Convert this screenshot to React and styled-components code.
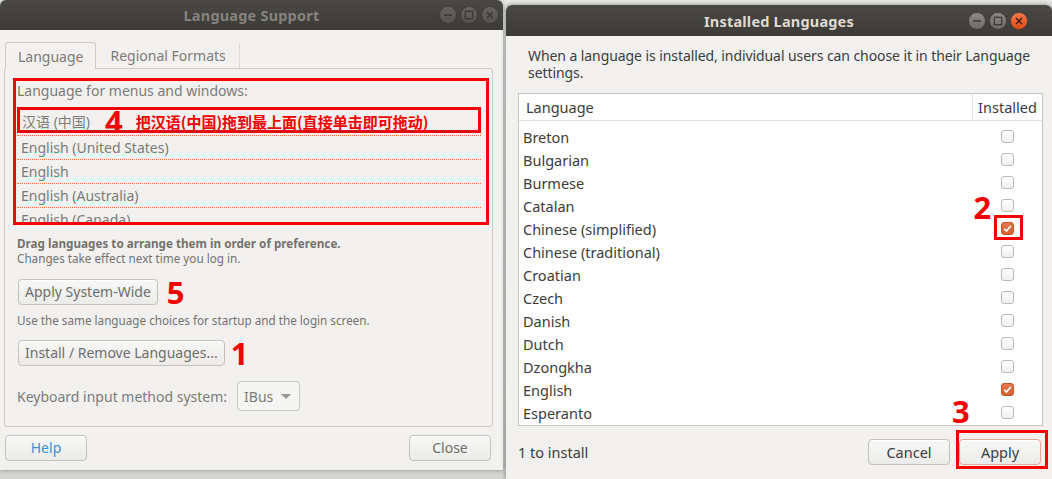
import React from "react";
import styled, { createGlobalStyle } from "styled-components";

const Global = createGlobalStyle`
  html, body { margin: 0; padding: 0; }
  body {
    width: 1052px; height: 479px; overflow: hidden;
    background: #d6d6d4;
    font-family: "Noto Sans", "Noto Sans CJK SC", sans-serif;
    font-size: 14px;
  }
`;

const Desktop = styled.div`
  display: flex;
  align-items: flex-start;
  width: 1052px;
  height: 479px;
  background: linear-gradient(#e8e8e7, #d4d4d2);
`;

const Window = styled.div`
  display: flex;
  flex-direction: column;
  background: #f2f1f0;
  border-radius: 6px 6px 0 0;
  overflow: hidden;
  box-shadow: 0 0 4px rgba(0, 0, 0, 0.35);
`;

const LeftWindow = styled(Window)`
  width: 503px;
  height: 470px;
  flex: none;
`;

const RightWindow = styled(Window)`
  flex: 1;
  margin-left: 3px;
  margin-top: 5px;
  height: 474px;
  box-shadow: 0 0 5px rgba(0, 0, 0, 0.45);
`;

const TitleBar = styled.div`
  position: relative;
  height: ${(p) => (p.$active ? 31 : 30)}px;
  flex: none;
  display: flex;
  align-items: center;
  justify-content: center;
  background: linear-gradient(#4a4844, #3c3b37);
  color: ${(p) => (p.$active ? "#dfdbd2" : "#85837e")};
  font-weight: bold;
  font-size: 14.5px;
  letter-spacing: 0.2px;
`;

const TitleButtons = styled.div`
  position: absolute;
  right: ${(p) => p.$right}px;
  top: 0;
  bottom: 0;
  display: flex;
  align-items: center;
  gap: 3px;
`;

const Btn = styled.button`
  font-family: inherit;
  font-size: ${(p) => p.$fs || 14}px;
  height: 26px;
  padding: 0 ${(p) => p.$pad || 12}px;
  width: ${(p) => (p.$w ? `${p.$w}px` : "auto")};
  border: 1px solid ${(p) => (p.$focus ? "#e2aa94" : "#c4c2bf")};
  border-radius: 4px;
  background: linear-gradient(#f8f8f7, #ecebea);
  color: ${(p) => p.$color || "#6e6e6b"};
  box-shadow: inset 0 1px 0 #ffffff;
  cursor: default;
  line-height: 24px;
`;

const Num = styled.span`
  font-family: "Noto Sans", sans-serif;
  font-weight: bold;
  font-size: 31px;
  line-height: 26px;
  color: #f40000;
  margin-left: ${(p) => p.$ml || 0}px;
`;

/* ---------- left window ---------- */

const LeftBody = styled.div`
  flex: 1;
  display: flex;
  flex-direction: column;
  padding: 12px 10px 0 4px;
`;

const Tabs = styled.div`
  display: flex;
  height: 26px;
  padding-left: 1px;
  position: relative;
  z-index: 1;
`;

const Tab = styled.div`
  height: ${(p) => (p.$active ? 27 : 26)}px;
  box-sizing: border-box;
  padding: 0 ${(p) => (p.$active ? 12 : 13)}px;
  display: flex;
  align-items: center;
  color: #7d7b78;
  font-size: 14px;
  border: 1px solid ${(p) => (p.$active ? "#cdcbc8" : "transparent")};
  border-bottom: none;
  border-right-color: ${(p) => (p.$active ? "#cdcbc8" : "#dddbd8")};
  border-radius: 3px 3px 0 0;
  background: #f2f1f0;
`;

const Notebook = styled.div`
  height: 359px;
  box-sizing: border-box;
  border: 1px solid #cdcbc8;
  border-radius: 3px;
  display: flex;
  flex-direction: column;
  padding: 9px 3px 0 8px;
`;

const AnnotBox = styled.div`
  border: 3px solid #f40000;
`;

const ListLabel = styled.div`
  line-height: 20px;
  padding-left: 1px;
  color: #7d7b78;
  font-size: 14px;
`;

const LangList = styled.div`
  height: 121px;
  overflow: hidden;
  margin: 0 5px 0 1px;
`;

const FirstRow = styled.div`
  padding: 6px 0 2px;
  border-bottom: 1px dotted #ff6a1f;
`;

const FirstRowBox = styled(AnnotBox)`
  height: 18px;
  display: flex;
  align-items: center;
  padding-left: 2px;
  padding-top: 2px;
`;

const RowText = styled.span`
  color: #7d7b78;
  font-size: 14px;
  font-family: "Noto Sans", "Noto Sans CJK SC", sans-serif;
`;

const Hint = styled.span`
  color: #f40000;
  font-weight: bold;
  font-size: 15px;
  font-family: "Noto Sans CJK SC", sans-serif;
  margin-left: 13px;
`;

const LangRow = styled.div`
  height: 23px;
  display: flex;
  align-items: center;
  padding-left: 4px;
  border-bottom: 1px dotted #ff6a1f;
`;

const HelpBlock = styled.div`
  margin: ${(p) => p.$mt}px 0 0 4px;
  font-size: 11.7px;
  line-height: 15px;
  color: #74726f;
`;

const Bold = styled.div`
  font-weight: bold;
`;

const BtnLine = styled.div`
  display: flex;
  align-items: center;
  gap: ${(p) => p.$gap}px;
  margin: ${(p) => p.$mt}px 0 0 5px;
`;

const KeyRow = styled.div`
  display: flex;
  align-items: center;
  margin: 15px 0 0 4px;
  gap: 10px;
  color: #7d7b78;
  font-size: 14px;
`;

const Combo = styled.div`
  height: 30px;
  box-sizing: border-box;
  width: 63px;
  border: 1px solid #c9c7c4;
  border-radius: 4px;
  background: #f5f5f4;
  display: flex;
  align-items: center;
  justify-content: space-between;
  padding: 0 8px 0 6px;
  color: #7d7b78;
`;

const Caret = styled.span`
  width: 0;
  height: 0;
  border-left: 5px solid transparent;
  border-right: 5px solid transparent;
  border-top: 5px solid #9a9895;
`;

const LeftFooter = styled.div`
  display: flex;
  justify-content: space-between;
  margin: 8px 2px 0 1px;
`;

/* ---------- right window ---------- */

const RightBody = styled.div`
  flex: 1;
  display: flex;
  flex-direction: column;
  padding: 0 11px 0 12px;
`;

const Intro = styled.div`
  margin: 11px 0 0 10px;
  line-height: 17px;
  font-size: 14px;
  letter-spacing: -0.08px;
  color: #3c3c3c;
  white-space: nowrap;
`;

const Table = styled.div`
  margin-top: 12px;
  margin-right: -2px;
  height: 333px;
  box-sizing: border-box;
  border: 1px solid #c8c6c3;
  background: #ffffff;
  display: flex;
  flex-direction: column;
`;

const HeadRow = styled.div`
  display: grid;
  grid-template-columns: 1fr 70px;
  height: 26px;
  border-bottom: 1px solid #e4e3e1;
  color: #3c3c3c;
  font-size: 14.5px;
`;

const HeadCell = styled.div`
  display: flex;
  align-items: center;
  justify-content: ${(p) => (p.$center ? "center" : "flex-start")};
  padding-left: ${(p) => (p.$center ? 0 : 7)}px;
  border-left: ${(p) => (p.$center ? "1px solid #e4e3e1" : "none")};
`;

const Rows = styled.div`
  padding-top: 4px;
`;

const Row = styled.div`
  display: grid;
  grid-template-columns: 1fr 70px;
  height: 23px;
  align-items: center;
  color: #3c3c3c;
  font-size: 14.5px;
`;

const RowName = styled.div`
  padding-left: 4px;
`;

const CheckCell = styled.div`
  display: flex;
  justify-content: center;
`;

const CheckAnchor = styled.span`
  position: relative;
  display: flex;
`;

const Check = styled.span`
  width: 13px;
  height: 13px;
  box-sizing: border-box;
  border-radius: 3px;
  border: 1px solid ${(p) => (p.$on ? "#c0562b" : "#bcbab6")};
  background: ${(p) =>
    p.$on ? "linear-gradient(#e8784a, #d75f30)" : "linear-gradient(#ffffff, #f0efee)"};
  display: flex;
  align-items: center;
  justify-content: center;
`;

const CheckFrame = styled.span`
  position: absolute;
  left: -7px;
  top: -7px;
  width: 29px;
  height: 25px;
  box-sizing: border-box;
  border: 3px solid #f40000;
`;

const FloatNum = styled(Num)`
  position: absolute;
  left: ${(p) => p.$x}px;
  top: ${(p) => p.$y}px;
`;

const RightFooter = styled.div`
  display: flex;
  align-items: center;
  margin-top: 13px;
  gap: 9px;
  color: #3c3c3c;
  font-size: 14.5px;
`;

const Status = styled.div`
  flex: 1;
`;

const ApplyWrap = styled.div`
  position: relative;
  display: flex;
`;

const ApplyFrame = styled.span`
  position: absolute;
  left: -3px;
  right: -7px;
  top: -9px;
  bottom: -4px;
  border: 3px solid #f40000;
`;

function WinButton({ kind, active }) {
  const isClose = kind === "close";
  const fill = isClose && active ? "url(#gOrange)" : active ? "url(#gGrayA)" : "url(#gGray)";
  const glyph = isClose && active ? "#3a1a10" : active ? "#3c3b37" : "#3a3935";
  return (
    <svg width="18" height="18" viewBox="0 0 18 18">
      <defs>
        <linearGradient id="gOrange" x1="0" y1="0" x2="0" y2="1">
          <stop offset="0" stopColor="#f47a4e" />
          <stop offset="1" stopColor="#df4a16" />
        </linearGradient>
        <linearGradient id="gGrayA" x1="0" y1="0" x2="0" y2="1">
          <stop offset="0" stopColor="#8d8b85" />
          <stop offset="1" stopColor="#6c6a65" />
        </linearGradient>
        <linearGradient id="gGray" x1="0" y1="0" x2="0" y2="1">
          <stop offset="0" stopColor="#65635e" />
          <stop offset="1" stopColor="#55534e" />
        </linearGradient>
      </defs>
      <circle cx="9" cy="9" r="8.5" fill={fill} stroke="#34332f" strokeWidth="0.6" />
      {kind === "min" && <line x1="5" y1="9" x2="13" y2="9" stroke={glyph} strokeWidth="1.6" />}
      {kind === "max" && <rect x="5.3" y="5.3" width="7.4" height="7.4" fill="none" stroke={glyph} strokeWidth="1.3" />}
      {isClose && <path d="M6 6 L12 12 M12 6 L6 12" stroke={glyph} strokeWidth="1.4" />}
    </svg>
  );
}

function CheckBox({ on }) {
  return (
    <Check $on={on}>
      {on && (
        <svg width="11" height="11" viewBox="0 0 11 11">
          <path d="M2.3 5.8 L4.5 8 L8.7 3" fill="none" stroke="#ffffff" strokeWidth="1.7" />
        </svg>
      )}
    </Check>
  );
}

const langs = [
  ["Breton", false],
  ["Bulgarian", false],
  ["Burmese", false],
  ["Catalan", false],
  ["Chinese (simplified)", true, true],
  ["Chinese (traditional)", false],
  ["Croatian", false],
  ["Czech", false],
  ["Danish", false],
  ["Dutch", false],
  ["Dzongkha", false],
  ["English", true],
  ["Esperanto", false],
];

export default function App() {
  return (
    <>
      <Global />
      <Desktop>
        <LeftWindow>
          <TitleBar>
            Language Support
            <TitleButtons $right={4}>
              <WinButton kind="min" />
              <WinButton kind="max" />
              <WinButton kind="close" />
            </TitleButtons>
          </TitleBar>
          <LeftBody>
            <Tabs>
              <Tab $active>Language</Tab>
              <Tab>Regional Formats</Tab>
            </Tabs>
            <Notebook>
              <AnnotBox>
                <ListLabel>Language for menus and windows:</ListLabel>
                <LangList>
                  <FirstRow>
                    <FirstRowBox>
                      <RowText>汉语 (中国)</RowText>
                      <Num $ml={15}>4</Num>
                      <Hint>把汉语(中国)拖到最上面(直接单击即可拖动)</Hint>
                    </FirstRowBox>
                  </FirstRow>
                  <LangRow><RowText>English (United States)</RowText></LangRow>
                  <LangRow><RowText>English</RowText></LangRow>
                  <LangRow><RowText>English (Australia)</RowText></LangRow>
                  <LangRow><RowText>English (Canada)</RowText></LangRow>
                </LangList>
              </AnnotBox>
              <HelpBlock $mt={11}>
                <Bold>Drag languages to arrange them in order of preference.</Bold>
                <div>Changes take effect next time you log in.</div>
              </HelpBlock>
              <BtnLine $mt={13} $gap={9}>
                <Btn $pad={6}>Apply System-Wide</Btn>
                <Num>5</Num>
              </BtnLine>
              <HelpBlock $mt={8}>Use the same language choices for startup and the login screen.</HelpBlock>
              <BtnLine $mt={12} $gap={6}>
                <Btn $pad={6}>Install / Remove Languages...</Btn>
                <Num>1</Num>
              </BtnLine>
              <KeyRow>
                <span>Keyboard input method system:</span>
                <Combo>
                  <span>IBus</span>
                  <Caret />
                </Combo>
              </KeyRow>
            </Notebook>
            <LeftFooter>
              <Btn $w={82} $color="#3d8fcd">Help</Btn>
              <Btn $w={82}>Close</Btn>
            </LeftFooter>
          </LeftBody>
        </LeftWindow>

        <RightWindow>
          <TitleBar $active>
            Installed Languages
            <TitleButtons $right={24}>
              <WinButton kind="min" active />
              <WinButton kind="max" active />
              <WinButton kind="close" active />
            </TitleButtons>
          </TitleBar>
          <RightBody>
            <Intro>
              When a language is installed, individual users can choose it in their Language
              <br />
              settings.
            </Intro>
            <Table>
              <HeadRow>
                <HeadCell>Language</HeadCell>
                <HeadCell $center>Installed</HeadCell>
              </HeadRow>
              <Rows>
                {langs.map(([name, on, marked]) => (
                  <Row key={name}>
                    <RowName>{name}</RowName>
                    <CheckCell>
                      <CheckAnchor>
                        <CheckBox on={on} />
                        {marked && (
                          <>
                            <CheckFrame />
                            <FloatNum $x={-27} $y={-28}>2</FloatNum>
                          </>
                        )}
                      </CheckAnchor>
                    </CheckCell>
                  </Row>
                ))}
              </Rows>
            </Table>
            <RightFooter>
              <Status>1 to install</Status>
              <Btn $w={82} $fs={14.5} $color="#3c3c3c">Cancel</Btn>
              <ApplyWrap>
                <Btn $w={82} $fs={14.5} $focus $color="#3c3c3c">Apply</Btn>
                <ApplyFrame />
                <FloatNum $x={-7} $y={-41}>3</FloatNum>
              </ApplyWrap>
            </RightFooter>
          </RightBody>
        </RightWindow>
      </Desktop>
    </>
  );
}
